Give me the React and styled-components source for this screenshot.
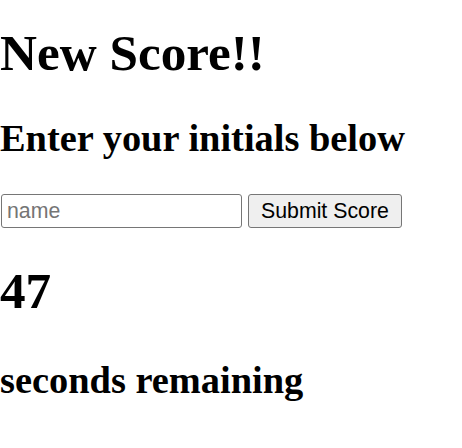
import React, { useState } from "react";
import styled, { createGlobalStyle } from "styled-components";

const GlobalStyle = createGlobalStyle`
  body {
    margin: 0;
    background: #fff;
    color: #000;
    font-family: "Liberation Serif", "Times New Roman", serif;
  }
`;

const Page = styled.div`
  display: flex;
  flex-direction: column;
  padding-top: 23px;
`;

const Title = styled.h1`
  font-size: 51.2px;
  font-weight: 700;
  line-height: 59px;
  margin: ${(p) => p.$top || 0}px 0 0;
`;

const Subtitle = styled.h2`
  font-size: 38.4px;
  font-weight: 700;
  line-height: 44px;
  margin: ${(p) => p.$top || 0}px 0 0;
`;

const Form = styled.form`
  display: flex;
  align-items: center;
  gap: 6px;
  padding-left: 1px;
  margin-top: 34px;
`;

const NameInput = styled.input`
  width: 241px;
  height: 34px;
  box-sizing: border-box;
  padding: 2px 5px;
  font-family: "Liberation Sans", Arial, sans-serif;
  font-size: 21.3px;
  border: 1px solid #767676;
  border-radius: 3px;
  &::placeholder {
    color: #757575;
  }
`;

const SubmitButton = styled.button`
  height: 34px;
  box-sizing: border-box;
  padding: 0 12px;
  font-family: "Liberation Sans", Arial, sans-serif;
  font-size: 21.3px;
  color: #000;
  background: #efefef;
  border: 1px solid #767676;
  border-radius: 3px;
`;

export default function App() {
  const [name, setName] = useState("");

  return (
    <Page>
      <GlobalStyle />
      <Title>New Score!!</Title>
      <Subtitle $top={34}>Enter your initials below</Subtitle>
      <Form onSubmit={(e) => e.preventDefault()}>
        <NameInput
          placeholder="name"
          value={name}
          onChange={(e) => setName(e.target.value)}
        />
        <SubmitButton type="submit">Submit Score</SubmitButton>
      </Form>
      <Title $top={33}>47</Title>
      <Subtitle $top={38}>seconds remaining</Subtitle>
    </Page>
  );
}
